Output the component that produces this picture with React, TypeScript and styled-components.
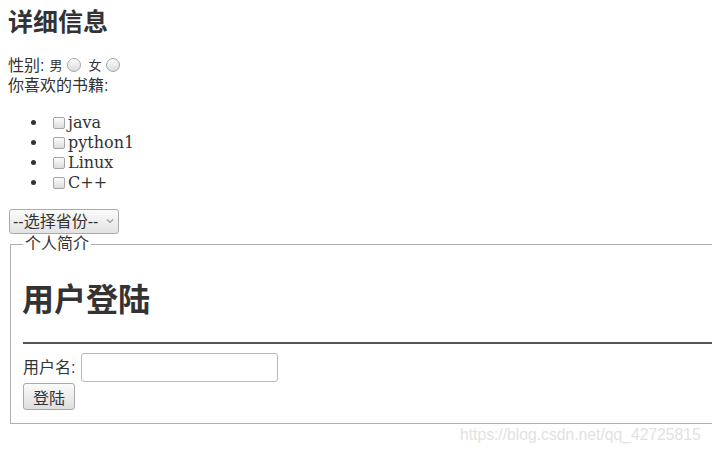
import React from "react";
import styled, { createGlobalStyle } from "styled-components";

const GlobalStyle = createGlobalStyle`
  html, body {
    margin: 0;
    padding: 0;
    background: #fff;
    overflow: hidden;
  }
  body {
    font-family: "Liberation Sans", "Noto Sans CJK SC", sans-serif;
    font-size: 16px;
    line-height: 20px;
    color: #333;
  }
`;

const Page = styled.div`
  position: relative;
  width: 712px;
  height: 454px;
  padding: 7px 0 0 8px;
  box-sizing: border-box;
  overflow: hidden;
`;

const Title = styled.h2`
  margin: 0 0 19px;
  font-size: 25px;
  line-height: 30px;
  font-weight: bold;
  color: #333;
`;

const Line = styled.div`
  display: flex;
  align-items: center;
  height: 20px;
  white-space: pre;
`;

const Small = styled.span<{ $gap: number }>`
  font-size: 13px;
  margin: 0 2px 0 ${(p) => p.$gap}px;
`;

const Radio = styled.input.attrs({ type: "radio" })`
  appearance: none;
  width: 14px;
  height: 14px;
  margin: 0 0 2px 3px;
  border-radius: 50%;
  border: 1px solid #a6a6a6;
  box-sizing: border-box;
  background: linear-gradient(#fcfcfc, #dcdcdc);
`;

const BookList = styled.ul`
  margin: 17px 0 16px;
  padding: 0 0 0 40px;
  list-style: disc;
  font-family: "DejaVu Serif", serif;
  font-size: 16px;
  line-height: 20px;
  color: #333;

  li {
    height: 20px;
  }
`;

const Check = styled.input.attrs({ type: "checkbox" })`
  appearance: none;
  width: 12px;
  height: 12px;
  margin: 0 3px 0 5px;
  vertical-align: -1px;
  border-radius: 2px;
  border: 1px solid #a6a6a6;
  box-sizing: border-box;
  background: linear-gradient(#fcfcfc, #dcdcdc);
`;

const SelectWrap = styled.div`
  position: relative;
  width: 110px;
  height: 25px;
  margin-left: 1px;
`;

const Select = styled.select`
  appearance: none;
  width: 110px;
  height: 25px;
  padding: 0 0 0 3px;
  border: 1px solid #aaa;
  border-radius: 3px;
  background: linear-gradient(#fbfbfb, #e3e3e3);
  font-family: "Liberation Sans", "Noto Sans CJK SC", sans-serif;
  font-size: 16px;
  color: #333;
`;

const Chevron = styled.svg`
  position: absolute;
  right: 5px;
  top: 9px;
  pointer-events: none;
`;

const Fieldset = styled.fieldset`
  width: 900px;
  margin: 0 0 0 2px;
  padding: 0 12px 13px;
  border: 1px solid #b0b0b0;
  box-sizing: border-box;
`;

const Legend = styled.legend`
  padding: 0 2px;
  font-size: 16px;
  line-height: 20px;
  color: #333;
`;

const LoginTitle = styled.h1`
  margin: 26px 0 0 -1px;
  font-size: 32px;
  line-height: 40px;
  font-weight: bold;
  color: #333;
`;

const Rule = styled.hr`
  margin: 22px 0 9px;
  border: 0;
  border-top: 2px solid #555;
`;

const Row = styled.div`
  display: flex;
  align-items: center;
  gap: 6px;
`;

const TextInput = styled.input.attrs({ type: "text" })`
  width: 197px;
  height: 29px;
  box-sizing: border-box;
  border: 1px solid #b8b8b8;
  border-radius: 3px;
  background: #fff;
`;

const Button = styled.button`
  width: 52px;
  height: 27px;
  margin-top: 1px;
  padding: 0;
  border: 1px solid #aaa;
  border-radius: 3px;
  background: linear-gradient(#fbfbfb, #dedede);
  font-family: "Liberation Sans", "Noto Sans CJK SC", sans-serif;
  font-size: 16px;
  color: #333;
`;

const Watermark = styled.div`
  position: absolute;
  left: 460px;
  top: 424px;
  font-family: "Liberation Sans", sans-serif;
  font-size: 15.7px;
  line-height: 22px;
  color: #e2e2e2;
`;

const books = ["java", "python1", "Linux", "C++"];

export default function App() {
  return (
    <>
      <GlobalStyle />
      <Page>
        <Title>详细信息</Title>
        <Line>
          性别:<Small $gap={5}>男</Small>
          <Radio name="sex" />
          <Small $gap={7}>女</Small>
          <Radio name="sex" />
        </Line>
        <Line>你喜欢的书籍:</Line>
        <BookList>
          {books.map((b) => (
            <li key={b}>
              <Check />
              {b}
            </li>
          ))}
        </BookList>
        <SelectWrap>
          <Select defaultValue="">
            <option value="">--选择省份--</option>
          </Select>
          <Chevron width="8" height="6" viewBox="0 0 8 6">
            <path d="M1 1.5 L4 4.5 L7 1.5" fill="none" stroke="#999" strokeWidth="1.2" />
          </Chevron>
        </SelectWrap>
        <Fieldset>
          <Legend>个人简介</Legend>
          <LoginTitle>用户登陆</LoginTitle>
          <Rule />
          <Row>
            用户名:
            <TextInput />
          </Row>
          <Button>登陆</Button>
        </Fieldset>
        <Watermark>https://blog.csdn.net/qq_42725815</Watermark>
      </Page>
    </>
  );
}
